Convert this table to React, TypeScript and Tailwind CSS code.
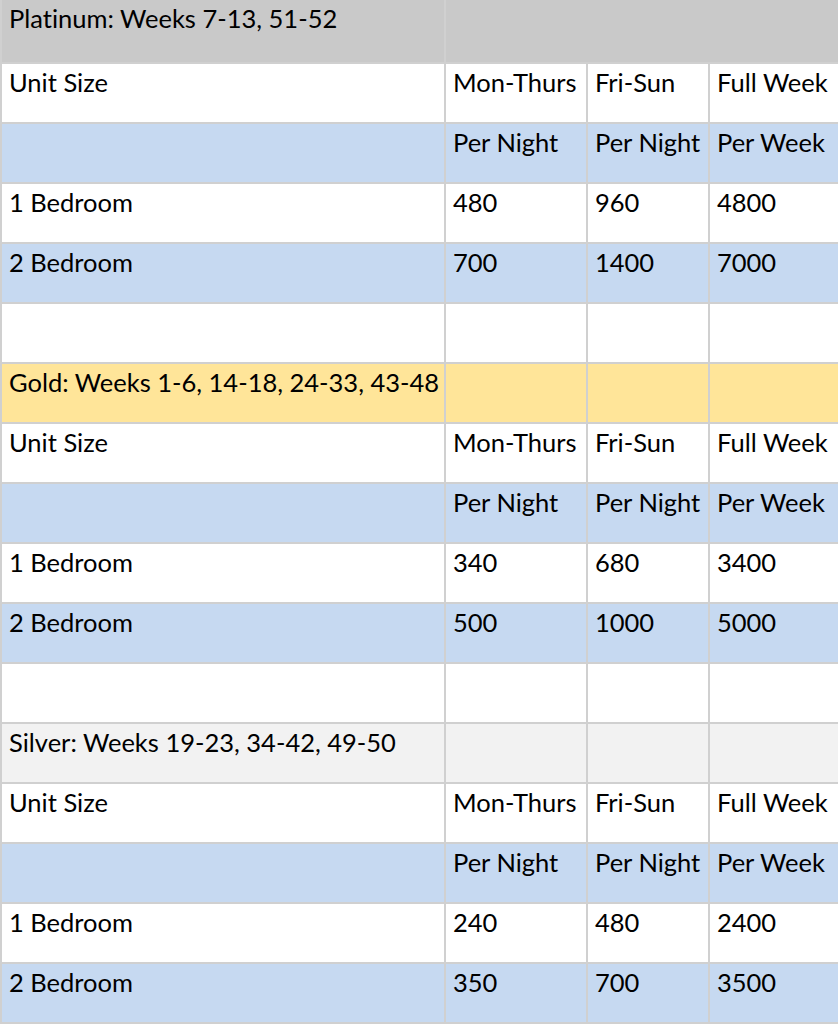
const sections = [
  {
    title: "Platinum: Weeks 7-13, 51-52",
    tone: "platinum",
    rows: [
      ["1 Bedroom", "480", "960", "4800"],
      ["2 Bedroom", "700", "1400", "7000"],
    ],
  },
  {
    title: "Gold: Weeks 1-6, 14-18, 24-33, 43-48",
    tone: "gold",
    rows: [
      ["1 Bedroom", "340", "680", "3400"],
      ["2 Bedroom", "500", "1000", "5000"],
    ],
  },
  {
    title: "Silver: Weeks 19-23, 34-42, 49-50",
    tone: "silver",
    rows: [
      ["1 Bedroom", "240", "480", "2400"],
      ["2 Bedroom", "350", "700", "3500"],
    ],
  },
];

const blue = "bg-[#c6d9f1]";

function Cell({ children, className = "", h = "h-[58px]" }: { children?: React.ReactNode; className?: string; h?: string }) {
  return <div className={`${h} px-[7px] pt-[3px] leading-[30px] whitespace-nowrap ${className}`}>{children}</div>;
}

export default function App() {
  return (
    <div className="w-[838px] h-[1024px] overflow-hidden bg-white">
      <div
        className="grid grid-cols-[442px_140px_120px_150px] gap-[2px] pl-[2px] pb-[2px] bg-[#d0d0d0] text-[25.5px] text-black w-max [font-variant-ligatures:none]"
        style={{ fontFamily: "Lato, 'Open Sans', sans-serif" }}
      >
        {sections.map((s, i) => (
          <Section key={s.title} s={s} last={i === sections.length - 1} />
        ))}
      </div>
    </div>
  );
}

function Section({ s, last }: { s: (typeof sections)[number]; last: boolean }) {
  return (
    <>
      {s.tone === "platinum" && (
        <>
          <Cell h="h-[62px]" className="bg-[#c9c9c9]">{s.title}</Cell>
          <Cell h="h-[62px]" className="bg-[#c9c9c9] col-span-3" />
        </>
      )}
      {s.tone === "gold" && (
        <>
          <Cell className="bg-[#ffe599]">{s.title}</Cell>
          <Cell className="bg-[#ffe599]" />
          <Cell className="bg-[#ffe599]" />
          <Cell className="bg-[#ffe599]" />
        </>
      )}
      {s.tone === "silver" && (
        <>
          <Cell className="bg-[#f2f2f2]">{s.title}</Cell>
          <Cell className="bg-[#f2f2f2]" />
          <Cell className="bg-[#f2f2f2]" />
          <Cell className="bg-[#f2f2f2]" />
        </>
      )}
      <Cell className="bg-white">Unit Size</Cell>
      <Cell className="bg-white">Mon-Thurs</Cell>
      <Cell className="bg-white">Fri-Sun</Cell>
      <Cell className="bg-white">Full Week</Cell>
      <Cell className={blue} />
      <Cell className={blue}>Per Night</Cell>
      <Cell className={blue}>Per Night</Cell>
      <Cell className={blue}>Per Week</Cell>
      {s.rows.map((r, ri) =>
        r.map((c, ci) => (
          <Cell key={`${ri}-${ci}`} className={ri === 1 ? blue : "bg-white"}>
            {c}
          </Cell>
        ))
      )}
      {!last && (
        <>
          <Cell className="bg-white" />
          <Cell className="bg-white" />
          <Cell className="bg-white" />
          <Cell className="bg-white" />
        </>
      )}
    </>
  );
}
